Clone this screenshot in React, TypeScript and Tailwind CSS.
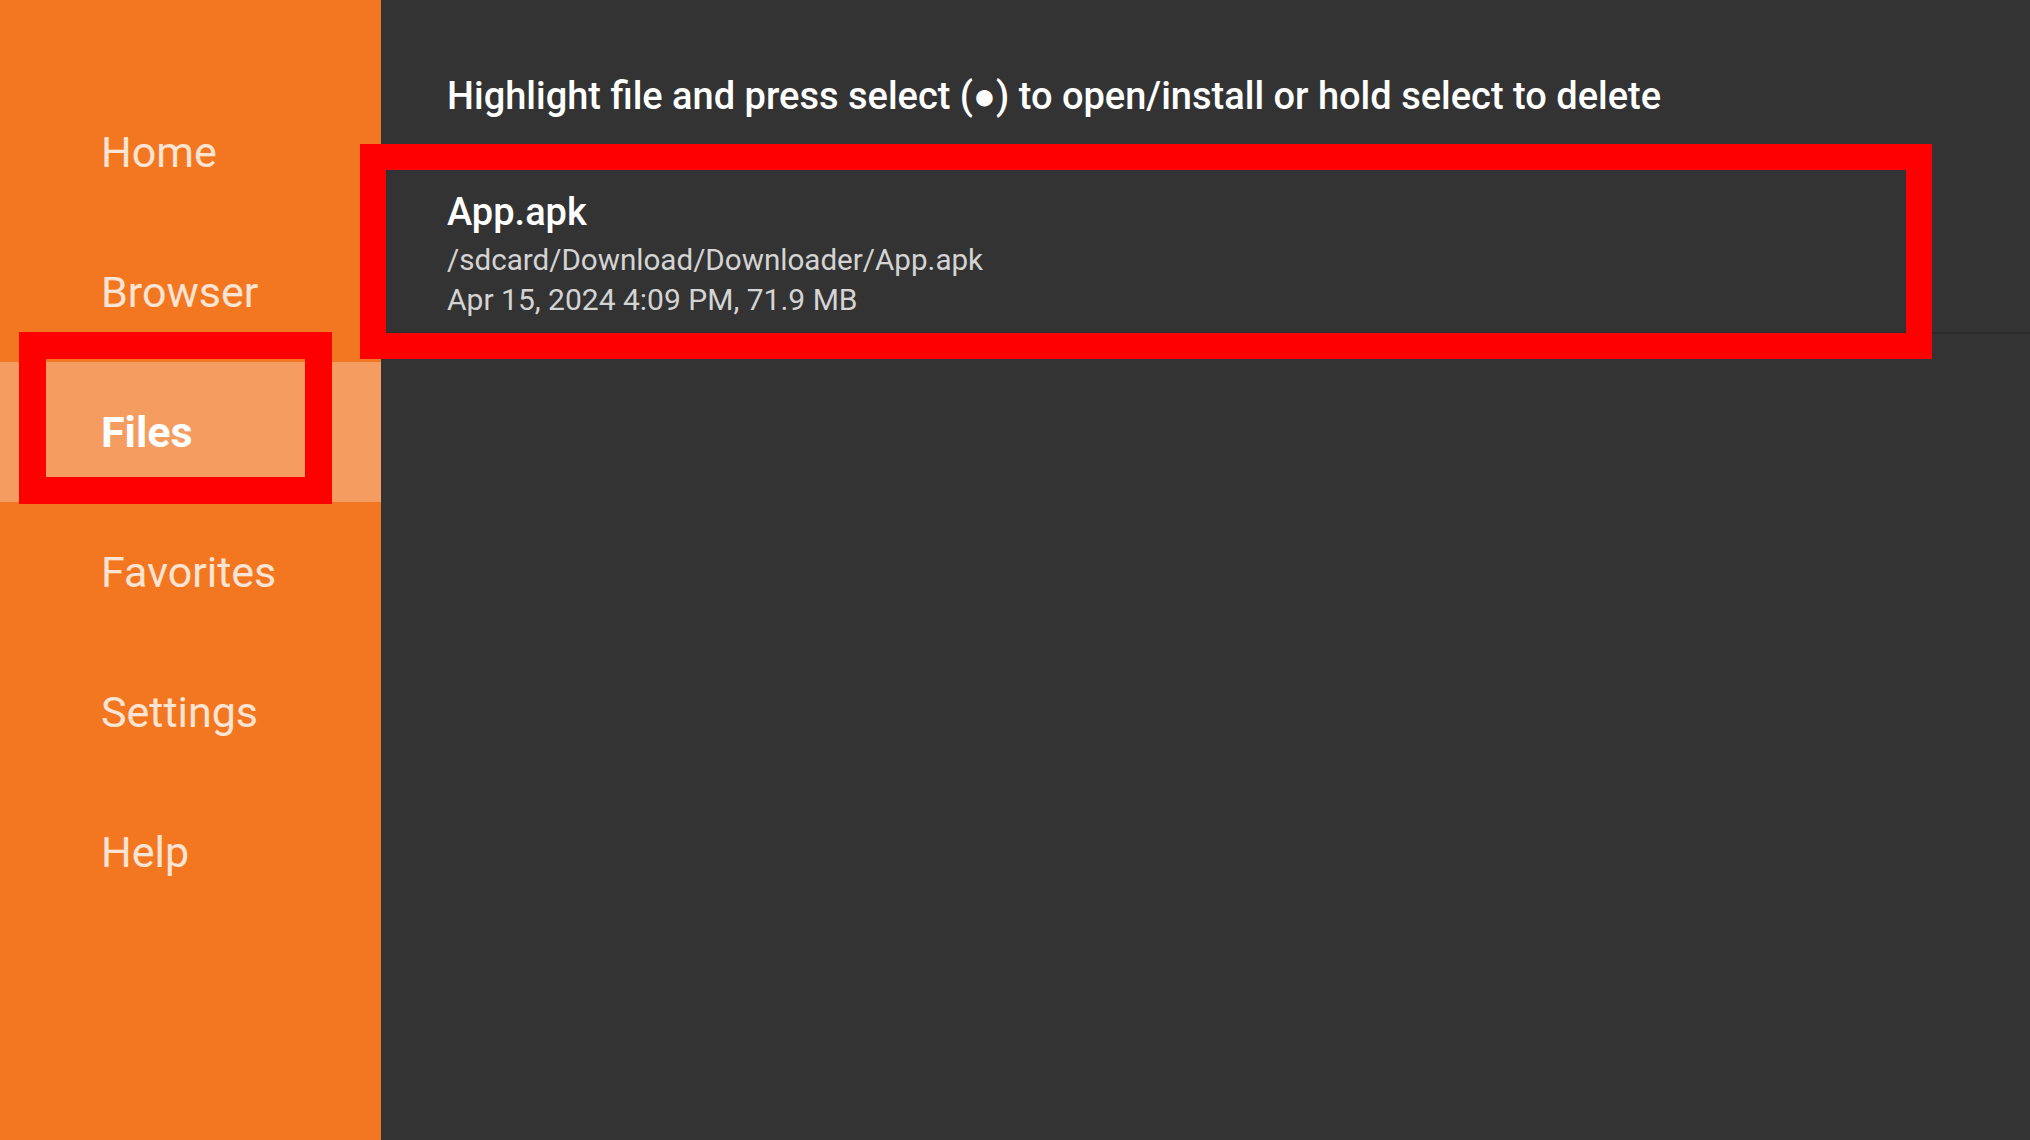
import React from 'react';

const NAV_ITEMS = ['Home', 'Browser', 'Files', 'Favorites', 'Settings', 'Help'];

const App: React.FC = () => {
  const active = 'Files';

  return (
    <div className="relative flex h-[1140px] w-full overflow-hidden font-['Roboto',sans-serif]">
      {/* Sidebar */}
      <aside className="w-[381px] shrink-0 bg-[#f37721] pt-[82px]">
        {NAV_ITEMS.map((item) => (
          <div
            key={item}
            className={
              item === active
                ? 'flex h-[140px] items-center bg-[#f59d60] pl-[101px] text-[43px] font-bold text-white'
                : 'flex h-[140px] items-center pl-[101px] text-[43px] text-white/80'
            }
          >
            {item}
          </div>
        ))}
      </aside>

      {/* File list */}
      <main className="flex-1 bg-[#333333]">
        <div className="flex h-[170px] items-start pl-[66px] pt-[76px]">
          <p className="whitespace-nowrap text-[38px] font-medium leading-[40px] text-white">
            Highlight file and press select (●) to open/install or hold select to delete
          </p>
        </div>
        <div className="border-b-2 border-[#2c2c2c] pb-[13px] pl-[66px] pt-[20px]">
          <div className="text-[38px] font-medium leading-[44px] text-white">App.apk</div>
          <div className="mt-[7px] text-[29.6px] leading-[39px] text-[#d4d4d4]">/sdcard/Download/Downloader/App.apk</div>
          <div className="text-[30px] leading-[39px] text-[#d4d4d4]">Apr 15, 2024 4:09 PM, 71.9 MB</div>
        </div>
      </main>

      {/* Annotation boxes */}
      <div className="absolute left-[19px] top-[332px] h-[172px] w-[313px] border-[27px] border-[#ff0000]" />
      <div className="absolute left-[360px] top-[144px] h-[215px] w-[1572px] border-[26px] border-[#ff0000]" />
    </div>
  );
};

export default App;
